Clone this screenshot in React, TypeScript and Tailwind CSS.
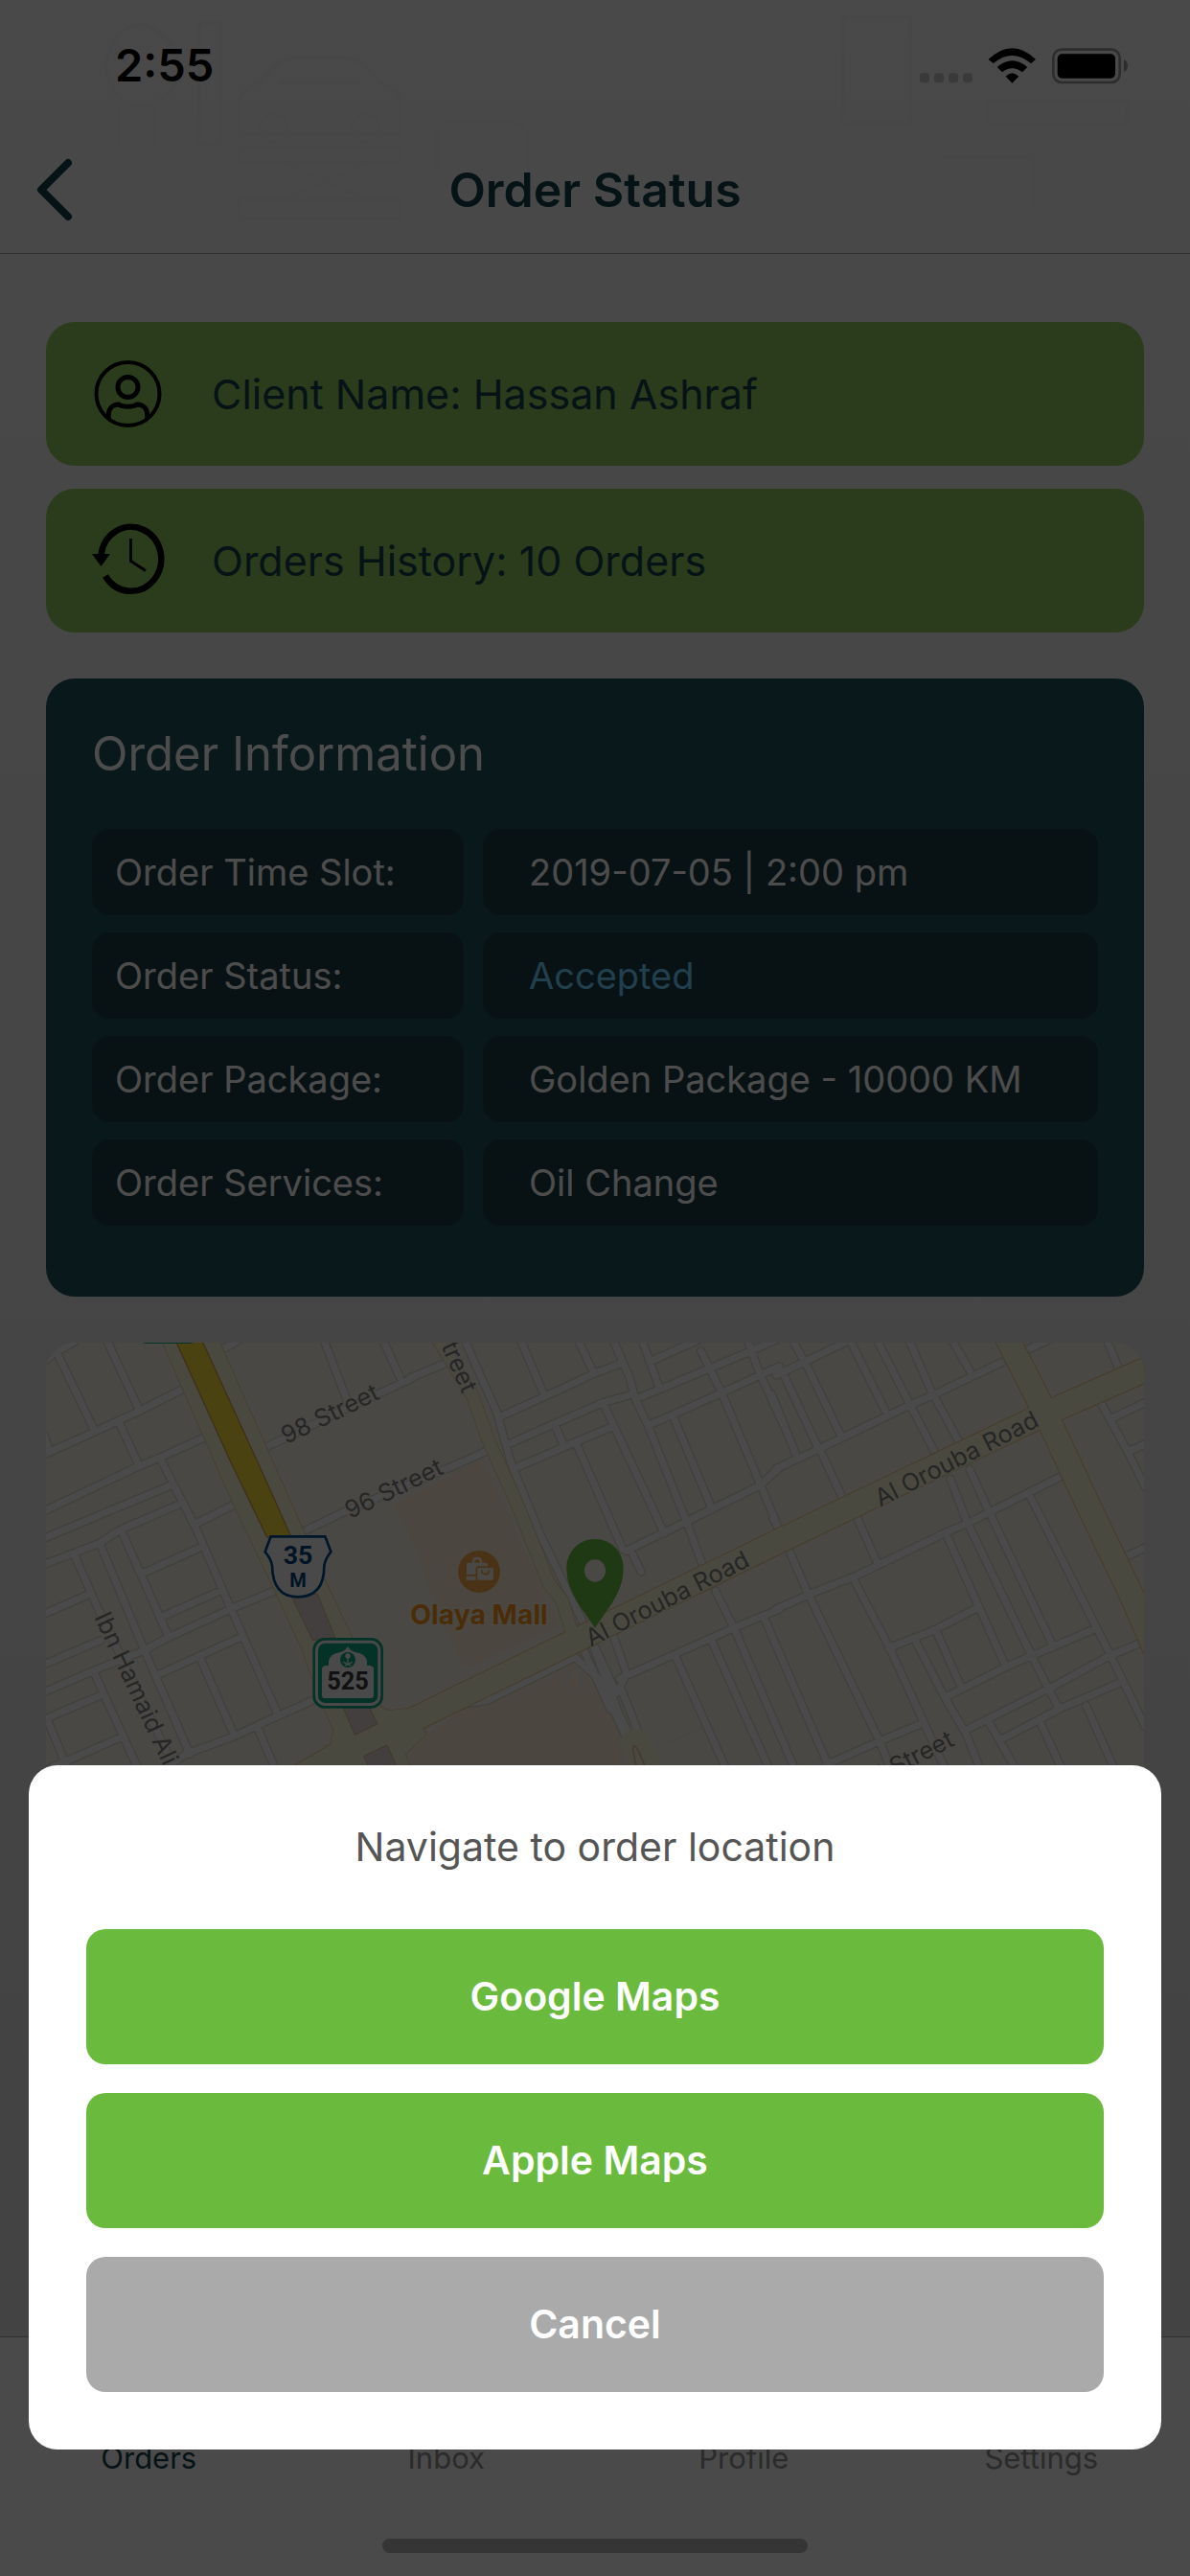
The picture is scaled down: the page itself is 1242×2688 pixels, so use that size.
import React from "react";

const orderRows = [
  { label: "Order Time Slot:", value: "2019-07-05 | 2:00 pm", tone: "text-white" },
  { label: "Order Status:", value: "Accepted", tone: "text-[#6ed2ff]" },
  { label: "Order Package:", value: "Golden Package - 10000 KM", tone: "text-white" },
  { label: "Order Services:", value: "Oil Change", tone: "text-white" },
];

const tabs = [
  { name: "Orders", tone: "text-[#17424c]" },
  { name: "Inbox", tone: "text-[#8f8f8f]" },
  { name: "Profile", tone: "text-[#8f8f8f]" },
  { name: "Settings", tone: "text-[#8f8f8f]" },
];

// Side streets, grouped by map tile; every tile is 1146 units wide.
const streetTiles = [
  {
    x: 0,
    d: "M-10 355L150 283L290 218L425 150M-5 530L290 390L360 362L495 300M-5 615L390 450M-5 697L170 630L230 590L410 512M465 572L590 510M-5 852L125 795M310 722L475 648M370 858L535 785M-5 1097L150 1030L310 965L385 925L575 838L715 780M-5 1010L170 935M345 1045L610 925M-5 1182L165 1110M-10 1345L60 1315L230 1240M380 1330L440 1290L590 1235L720 1175L830 1125M690 330L940 210L1150 113M815 590L940 530L1250 400L1390 338M550 25L605 -5M-5 60L35 30L90 0M35 35L150 275M190 -5L290 210M230 255L290 385M-5 295L10 340M360 370L470 585L580 838L725 1165M90 670L160 830L400 1330M170 635L310 970L450 1290M240 600L380 915M150 1035L290 1340M5 1185L65 1330M485 995L590 1235M665 1215L715 1330M870 -5L945 190M1055 -5L1110 115",
  },
  {
    x: 1146,
    d: "M-5 113L110 65M280 233L420 170L570 100L650 70M305 320L450 255L600 190L690 165M325 395L510 315L630 265M700 180L930 85L1060 30L1150 -10M750 60L895 -5M740 262L970 160L1100 100L1150 78M670 655L860 563L1090 450L1150 395M650 1055L820 980L1010 895L1150 838M340 -5L415 170M520 -5L570 100M630 -5L680 110L700 180L740 265L860 565L910 700M720 -5L775 145M905 30L970 160L1092 450L1150 590M1050 -5L1085 90L1165 265M450 265L475 325M515 320L660 650M600 195L790 600M820 240L940 525M690 665L718 720M950 780L1010 900L1195 1330M940 940L1115 1330M825 985L980 1330M1105 870L1305 1330M630 920L672 1040L652 1080L720 1250L760 1330M165 -5L265 220L310 380L400 600L560 930L600 1040L650 1170L700 1270M180 1132L235 1123L510 988L590 1060L670 1240M540 970L620 1150M575 960L640 1100",
  },
  {
    x: 2292,
    d: "M-5 105L90 60L225 -5M-5 397L130 335L410 200L490 165L700 65M-5 837L100 790L240 735L520 600L600 565L880 425M345 960L495 900L620 835M530 1110L720 1015L990 900M590 1215L870 1075L1035 985L1130 945M700 1245L880 1150L1065 1070M150 1325L320 1250L440 1200M1045 240L1150 190M1095 345L1150 320M1085 675L1150 645M770 30L845 -5M45 -5L90 75L195 290M22 112L122 325M-20 165L55 350M225 -5L335 215M310 -5L410 190L490 345M410 -5L480 155L565 310M545 -5L600 90M130 335L200 485M-15 555L5 590M245 545L310 690M35 655L95 790L320 1255L350 1330M240 750L350 960L520 1330M530 610L712 1015M540 430L590 560L795 985L880 1150M600 400L660 530L860 950M790 485L1040 980L1150 1205M430 935L520 1110L590 1230L630 1330M495 905L575 1085M1005 180L1095 345L1150 455M1030 -5L1065 80M660 1190L740 1330M825 1200L885 1330M965 1140L1050 1330",
  },
];

const mainRoads =
  "M780 1370L1000 1240L1146 1185L1700 915L2292 626L3130 225L3460 80M3010 -10L3132 230L3277 540L3402 800L3480 980";
const olayaStreet =
  "M1226 -10L1336 170L1386 310L1476 510L1576 760L1616 810L1650 920";
const highway =
  "M362 -5L540 -5L805 590L870 740L955 920L1050 1145L1075 1155L1146 1147L1190 1230L1125 1290L1140 1330L800 1330L890 1270L900 1215L870 1150L800 960L710 765L583 500Z";

function StatusIcons() {
  return (
    <svg viewBox="60 50 660 120" className="h-10 w-[220px]" role="img" aria-label="Wi-Fi connected, battery full">
      <g fill="#c4c4c4">
        <rect x="60" y="135" width="30" height="30" rx="9" />
        <rect x="105" y="135" width="30" height="30" rx="9" />
        <rect x="150" y="135" width="30" height="30" rx="9" />
        <rect x="195" y="135" width="30" height="30" rx="9" />
      </g>
      <path d="M275 92Q349 22 423 92L408 105Q349 55 290 105ZM302 116Q349 76 397 116L381 132Q349 107 318 132ZM329 145Q349 124 370 145L349 166Z" />
      <rect x="478" y="61" width="208" height="103" rx="26" fill="none" stroke="#969696" strokeWidth="8" />
      <rect x="491" y="75" width="181" height="76" rx="14" />
      <path d="M699 93C715 99 715 125 699 132Z" fill="#969696" />
    </svg>
  );
}

function ClientIcon() {
  return (
    <svg viewBox="0 0 80 80" className="size-20 shrink-0" fill="none" stroke="black" strokeWidth="5" aria-hidden="true">
      <circle cx="40.500" cy="40" r="33" strokeWidth="4" />
      <circle cx="40.500" cy="33" r="10.500" />
      <path d="M20.500 66C19 56 24 51 31 51C35 54 46 54 50 51C57 51 62 56 60.500 66" />
    </svg>
  );
}

function HistoryIcon() {
  return (
    <svg viewBox="0 0 80 80" className="size-20 shrink-0" fill="none" stroke="black" aria-hidden="true">
      <path d="M12.500 34A31.500 33.500 0 1 1 17 56" strokeWidth="6.500" />
      <path d="M3 33H22L12.500 46Z" fill="black" stroke="none" />
      <path d="M43.500 17V40.500L59 50.500" strokeWidth="2.800" />
    </svg>
  );
}

// Faint car-service drawings behind the header.
function BackdropArt() {
  return (
    <svg viewBox="0 0 1242 264" className="pointer-events-none absolute inset-x-0 top-0 w-full" fill="none" stroke="#efefef" strokeWidth="4" aria-hidden="true">
      <path d="M250 148V105Q252 92 272 86L290 66Q298 60 320 60H350Q372 60 380 68L396 86Q416 92 418 105V148M292 86H376M250 140H418M250 154H418V170H250ZM300 172L380 206M380 172L300 206M250 208H418V228H250Z" />
      <circle cx="286" cy="134" r="15" />
      <circle cx="382" cy="134" r="15" />
      <path d="M110 70Q118 26 146 26Q176 30 190 70Q180 108 146 112Q116 106 110 70ZM124 112V156M162 112V156M208 24H230V150H208ZM456 176V140Q460 126 480 126H530Q548 128 550 140V176M880 18H950V128H880ZM1030 106H1176V130H1030ZM984 164H1078V220" />
    </svg>
  );
}

function LocationMap() {
  return (
    <svg viewBox="0 3 3438 1617" className="block w-full" role="img" aria-label="Map of the order location near Olaya Mall" fontFamily="Inter, sans-serif">
      <rect width="3438" height="1620" fill="#f7f1e4" />
      <path d="M1085 510L1366 362L1610 890L1325 1022L1300 1000L1230 860L1160 660Z" fill="#faefd6" />
      <path d="M1140 1270L1316 1142L1385 1135L1650 1010L1720 1070L1810 1250V1620H1138Z" fill="#faefd6" />
      <g fill="none" strokeLinejoin="round" strokeLinecap="round">
        {streetTiles.map((t) => (
          <path key={t.x} d={t.d} transform={`translate(${t.x} 0)`} stroke="#d8d4c9" strokeWidth="29" />
        ))}
        {streetTiles.map((t) => (
          <path key={t.x} d={t.d} transform={`translate(${t.x} 0)`} stroke="#f8f8fa" strokeWidth="21" />
        ))}
        <path d="M1910 1272L2055 1208" stroke="#eceae6" strokeWidth="5" />
        <path d="M1650 1020L1622 1072M1678 1022L1674 1085" stroke="#e8eaec" strokeWidth="7" />
        <path d={highway} stroke="#ecc79a" strokeWidth="5" />
        <path d={mainRoads} stroke="#ecc287" strokeWidth="80" />
        <path d={olayaStreet} stroke="#ecc99a" strokeWidth="43" />
        <path d="M1870 1340L1828 1250Q1840 1225 1866 1250L1905 1340" stroke="#f8f5d8" strokeWidth="55" />
        <path d={highway} fill="#f8f5d8" />
        <path d={mainRoads} stroke="#f8f5d8" strokeWidth="74" />
        <path d={olayaStreet} stroke="#f8f5d8" strokeWidth="38" />
        <path d="M1850 1340L1838 1280Q1836 1250 1855 1280L1880 1340" stroke="#e8c7a0" strokeWidth="6" />
      </g>
      <path d="M405 -5H488L600 240L705 470L768 612H692L580 380Z" fill="#f7dc36" stroke="#d59a5b" strokeWidth="4" />
      <path d="M770 800L850 790L905 925L835 935ZM928 1140H1010L1038 1196L967 1231ZM995 1297L1068 1263L1098 1330H1010Z" fill="#dcd2cf" stroke="#dcb38a" strokeWidth="3" />
      <path d="M295 0H470L455 6H310Z" fill="#18ae8a" />

      <g fill="#808080" fontSize="76" stroke="#f7f1e4" strokeWidth="8" paintOrder="stroke" strokeLinejoin="round">
        <text transform="translate(752 322) rotate(-26)">98 Street</text>
        <text transform="translate(952 556) rotate(-26)">96 Street</text>
        <text transform="translate(1304 165) rotate(66)" textAnchor="end">treet</text>
        <text transform="translate(150 862) rotate(65)">Ibn Hamaid Ali</text>
        <text transform="translate(2848 1262) rotate(-27)" textAnchor="end">d Street</text>
        <g stroke="#f8f5d8">
          <text transform="translate(1706 956) rotate(-27)">Al Orouba Road</text>
          <text transform="translate(2612 518) rotate(-27)">Al Orouba Road</text>
        </g>
      </g>

      <path d="M704 610H874L892 658Q874 680 871 702Q871 799 788 799Q710 799 708 702Q705 680 686 658Z" fill="#f4f4f4" stroke="#004a8c" strokeWidth="8" strokeLinejoin="round" />
      <g fill="#00437d" fontFamily="Roboto, sans-serif" fontWeight="700" textAnchor="middle">
        <text x="789" y="695" fontSize="80">35</text>
        <text x="789" y="767" fontSize="60">M</text>
      </g>

      <rect x="835" y="927" width="221" height="221" rx="38" fill="#12a883" />
      <rect x="843" y="935" width="205" height="205" rx="31" fill="#f3f3f3" />
      <rect x="852" y="944" width="187" height="187" rx="22" fill="#12a883" />
      <path d="M864 1024Q864 1013 885 1013V1000Q888 978 922 972Q940 966 945 953Q950 966 968 972Q1002 978 1005 1000V1013Q1026 1013 1026 1024V1106Q1026 1116 1016 1116H874Q864 1116 864 1106Z" fill="#f5f5f5" />
      <circle cx="945" cy="996" r="24" fill="#12a883" />
      <path d="M945 1006V988M931 1003Q945 1014 959 1003M936 1014L954 1006M954 1014L936 1006" fill="none" stroke="#f5f5f5" strokeWidth="4" />
      <circle cx="945" cy="984" r="8" fill="#f5f5f5" />
      <text x="945" y="1090" fontSize="76" fontWeight="700" fontFamily="Roboto, sans-serif" textAnchor="middle" fill="#3a3a3a">525</text>

      <circle cx="1356" cy="720" r="66" fill="#f9a94c" />
      <path d="M1317 696Q1317 692 1322 692H1378Q1383 692 1383 697V703H1353Q1346 703 1346 710V729H1317ZM1317 734H1346V746H1315Z" fill="#f7f1e4" />
      <path d="M1338 694V690Q1338 678 1350 678Q1362 678 1362 690V694" fill="none" stroke="#f7f1e4" strokeWidth="7" />
      <rect x="1351" y="708" width="50" height="38" rx="4" fill="#f7f1e4" />
      <path d="M1364 715Q1364 728 1376 728Q1388 728 1388 715" fill="none" stroke="#f9a94c" strokeWidth="5" />
      <text x="1356" y="885" fontSize="85" fontWeight="700" textAnchor="middle" fill="#f8981d" stroke="#faf3e4" strokeWidth="8" paintOrder="stroke">Olaya Mall</text>

      <path fillRule="evenodd" d="M1719 897C1688 845 1630 790 1630 710C1630 655 1670 618 1719 618C1768 618 1808 655 1808 710C1808 790 1750 845 1719 897ZM1719 682A33 35 0 1 0 1719 752A33 35 0 1 0 1719 682Z" fill="#68bf43" />
    </svg>
  );
}

export default function App() {
  return (
    <div className="relative flex min-h-screen flex-col bg-linear-to-b from-[#f3f3f3] to-[#dedede] font-[Inter,sans-serif] text-[#17424c]">
      <BackdropArt />
      <header className="relative border-b border-[#a0a0a0]">
        <div className="flex h-[132px] items-center justify-between pt-1 pr-[62px] pl-[120px] text-black">
          <span className="text-[47px] font-semibold">2:55</span>
          <StatusIcons />
        </div>
        <div className="grid h-[132px] grid-cols-[120px_1fr_120px] items-center">
          <button type="button" aria-label="Back" className="pl-[38px]">
            <svg viewBox="0 0 38 66" className="h-[66px] w-[38px]" fill="none" stroke="#17424c" strokeWidth="8" strokeLinecap="round" strokeLinejoin="round">
              <path d="M33 5L5 33L33 61" />
            </svg>
          </button>
          <h1 className="text-center text-[50px] font-semibold">Order Status</h1>
        </div>
      </header>

      <main className="relative flex flex-col gap-12 px-12 pt-[71px] pb-10">
        <div className="flex flex-col gap-6">
          <div className="flex h-[150px] items-center gap-12 rounded-[30px] bg-[#8cc85d] px-[45px] text-[43px]">
            <ClientIcon />
            <p>Client Name: Hassan Ashraf</p>
          </div>
          <div className="flex h-[150px] items-center gap-12 rounded-[30px] bg-[#8cc85d] px-[45px] text-[43px]">
            <HistoryIcon />
            <p>Orders History: 10 Orders</p>
          </div>
        </div>

        <section className="rounded-[30px] bg-[#21505d] px-12 pt-12 pb-[74px] text-white">
          <h2 className="text-[49px] leading-[62px]">Order Information</h2>
          <dl className="mt-[47px] flex flex-col gap-[18px] text-[38px]">
            {orderRows.map((row) => (
              <div key={row.label} className="grid grid-cols-[388fr_642fr] gap-5">
                <dt className="flex h-[90px] items-center rounded-[18px] bg-[#1b3c43] pl-6">{row.label}</dt>
                <dd className={`flex h-[90px] items-center rounded-[18px] bg-[#1b3c43] pl-12 ${row.tone}`}>{row.value}</dd>
              </div>
            ))}
          </dl>
        </section>

        <div className="overflow-hidden rounded-[30px]">
          <LocationMap />
        </div>
      </main>

      <nav className="relative mt-auto flex h-[250px] flex-col border-t border-[#a0a0a0] bg-[#f8f8f8]">
        <div className="grid grid-cols-4 pt-[108px] text-center text-[31px] leading-9">
          {tabs.map((tab) => (
            <a key={tab.name} href={`#${tab.name.toLowerCase()}`} className={tab.tone}>
              {tab.name}
            </a>
          ))}
        </div>
        <div className="mx-auto mt-auto mb-6 h-[15px] w-[444px] rounded-full bg-[#b3b3b3]" />
      </nav>

      <div className="absolute inset-0 flex flex-col justify-end bg-black/70 px-[30px] pb-[132px]">
        <div role="dialog" aria-modal="true" aria-labelledby="navigate-title" className="flex flex-col rounded-[30px] bg-white p-[60px]">
          <h2 id="navigate-title" className="text-center text-[41px] leading-[50px] text-[#555555]">
            Navigate to order location
          </h2>
          <div className="mt-[61px] flex flex-col gap-[30px] text-[41px] font-semibold text-white">
            <button type="button" className="h-[141px] rounded-[20px] bg-[#6abb3d]">Google Maps</button>
            <button type="button" className="h-[141px] rounded-[20px] bg-[#6abb3d]">Apple Maps</button>
            <button type="button" className="h-[141px] rounded-[20px] bg-[#aaaaaa]">Cancel</button>
          </div>
        </div>
      </div>
    </div>
  );
}
